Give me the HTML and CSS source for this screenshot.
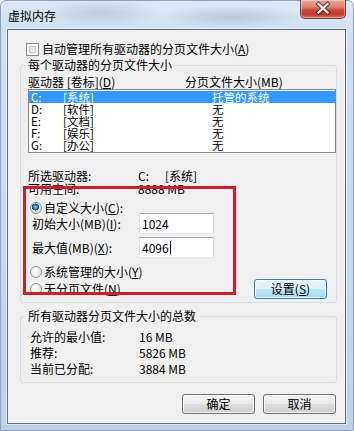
FILE: index.html
```html
<!DOCTYPE html>
<html lang="zh-CN">
<head>
<meta charset="utf-8">
<title>虚拟内存</title>
<link rel="stylesheet" href="styles.css">
</head>
<body>
<div class="window">
  <div class="titlebar">
    <span class="title">虚拟内存</span>
    <button class="close" aria-label="关闭">
      <svg width="46" height="19" viewBox="0 0 46 19">
        <path d="M18.5 5 L27.5 13.5 M27.5 5 L18.5 13.5" stroke="#4a1510" stroke-width="4.2" stroke-linecap="square" fill="none" opacity="0.75"/>
        <path d="M18.5 5 L27.5 13.5 M27.5 5 L18.5 13.5" stroke="#ffffff" stroke-width="2.2" stroke-linecap="square" fill="none"/>
      </svg>
    </button>
  </div>
  <div class="content">
    <label class="check-row"><span class="checkbox"></span><span>自动管理所有驱动器的分页文件大小(<u>A</u>)</span></label>

    <fieldset class="group drives">
      <legend>每个驱动器的分页文件大小</legend>
      <div class="list-head"><span class="col-drive">驱动器 [卷标](<u>D</u>)</span><span class="col-size">分页文件大小(MB)</span></div>
      <div class="listbox">
        <div class="row selected"><span class="c-letter">C:</span><span class="c-label">[系统]</span><span class="c-size">托管的系统</span></div>
        <div class="row"><span class="c-letter">D:</span><span class="c-label">[软件]</span><span class="c-size">无</span></div>
        <div class="row"><span class="c-letter">E:</span><span class="c-label">[文档]</span><span class="c-size">无</span></div>
        <div class="row"><span class="c-letter">F:</span><span class="c-label">[娱乐]</span><span class="c-size">无</span></div>
        <div class="row"><span class="c-letter">G:</span><span class="c-label">[办公]</span><span class="c-size">无</span></div>
      </div>
      <div class="info first"><span class="k">所选驱动器:</span><span class="v"><span class="drv">C:</span>[系统]</span></div>
      <div class="info"><span class="k">可用空间:</span><span class="v">8888 MB</span></div>
      <div class="radio-row custom"><span class="radio on"></span><span>自定义大小(<u>C</u>):</span></div>
      <div class="field-row f1"><span class="k">初始大小(MB)(<u>I</u>):</span><span class="input">1024</span></div>
      <div class="field-row f2"><span class="k">最大值(MB)(<u>X</u>):</span><span class="input">4096<span class="caret"></span></span></div>
      <div class="bottom-row">
        <div class="radios">
          <div class="radio-row r2"><span class="radio"></span><span>系统管理的大小(<u>Y</u>)</span></div>
          <div class="radio-row r3"><span class="radio"></span><span>无分页文件(<u>N</u>)</span></div>
        </div>
        <button class="btn default">设置(<u>S</u>)</button>
      </div>
    </fieldset>

    <fieldset class="group totals">
      <legend>所有驱动器分页文件大小的总数</legend>
      <div class="total first"><span class="k">允许的最小值:</span><span class="v">16 MB</span></div>
      <div class="total"><span class="k">推荐:</span><span class="v">5826 MB</span></div>
      <div class="total"><span class="k">当前已分配:</span><span class="v">3884 MB</span></div>
    </fieldset>

    <div class="actions">
      <button class="btn">确定</button>
      <button class="btn">取消</button>
    </div>

    <div class="highlight"></div>
  </div>
</div>
</body>
</html>
```

FILE: styles.css
```css
* { box-sizing: border-box; }
html, body { margin: 0; padding: 0; }
body {
  width: 354px;
  height: 431px;
  overflow: hidden;
  font-family: "Noto Sans CJK SC", "Noto Sans", sans-serif;
  font-size: 12px;
  color: #000;
  background: #fff;
}
u { text-decoration: underline; text-underline-offset: 1px; }

.window {
  width: 354px;
  height: 431px;
  display: flex;
  flex-direction: column;
  border: 1px solid #8ea3ba;
  border-radius: 6px 6px 0 0;
  background:
    radial-gradient(ellipse 60px 14px at 100px 12px, rgba(140,160,185,0.35), transparent),
    radial-gradient(ellipse 70px 12px at 230px 16px, rgba(130,150,175,0.35), transparent),
    linear-gradient(180deg, #dde8f4 0%, #cfe0f1 8%, #c6d9ed 60%, #bcd1e8 100%);
}

.titlebar {
  height: 28px;
  flex: 0 0 28px;
  display: flex;
  align-items: center;
  padding-left: 7px;
}
.title { flex: 1; line-height: 14px; padding-top: 1px; }
.close {
  align-self: flex-start;
  margin-top: -1px;
  margin-right: 7px;
  width: 46px;
  height: 19px;
  padding: 0;
  border: 1px solid #7e3a33;
  border-top: none;
  border-radius: 0 0 5px 5px;
  background: linear-gradient(180deg, #e9a99d 0%, #dc7e70 40%, #c8473a 55%, #c23a2c 80%, #d9786a 100%);
  box-shadow: inset 0 0 0 1px rgba(255,255,255,0.35);
  display: block;
}
.close svg { display: block; margin: -1px 0 0 -1px; }

.content {
  flex: 1;
  margin: 0 7px 6px 6px;
  border: 1px solid #5f6f83;
  background: #f0f0f0;
  position: relative;
  display: flex;
  flex-direction: column;
  box-shadow: 0 0 0 1px rgba(255,255,255,0.55);
}

.check-row {
  margin: 11px 0 0 18px;
  display: flex;
  align-items: center;
  gap: 3px;
  line-height: 16px;
}
.checkbox {
  width: 13px;
  height: 13px;
  border: 1px solid #8f8f8f;
  background: linear-gradient(135deg, #d8d8d8, #f8f8f8);
  box-shadow: inset 0 0 0 2px #f4f4f4, inset 0 0 0 3px #c9c9c9;
}

.group {
  margin: 1px 8px 0 12px;
  padding: 0 0 6px 7px;
  border: 1px solid #d5dfe5;
  border-radius: 3px;
  min-width: 0;
}
.group legend {
  padding: 0 2px;
  margin-left: -2px;
  line-height: 14px;
}
.totals { margin-top: 6px; padding-bottom: 5px; }

.list-head {
  margin-top: 3px;
  line-height: 14px;
  display: flex;
}
.col-drive { width: 157px; }

.listbox {
  width: 308px;
  height: 64px;
  border: 1px solid #828790;
  background: #fff;
  padding-top: 1px;
}
.row {
  height: 12px;
  line-height: 12px;
  font-size: 11.5px;
  display: flex;
  padding-left: 2px;
}
.row.selected { background: #3399ff; color: #fff; }
.c-letter { width: 32px; }
.c-label { width: 149px; }

.info { display: flex; line-height: 13px; }
.info.first { margin-top: 16px; }
.info .k { width: 110px; }
.drv { display: inline-block; width: 27px; }

.radio-row {
  display: flex;
  align-items: center;
  gap: 2px;
  margin-left: 2px;
}
.radio-row.custom { margin-top: 7px; line-height: 12px; }
.radio-row.r2 { margin-top: 7px; line-height: 14px; }
.radio-row.r3 { margin-top: 3px; line-height: 14px; }
.radio {
  width: 12px;
  height: 12px;
  border-radius: 50%;
  border: 1px solid #8e8f8f;
  background: radial-gradient(circle at 40% 40%, #ffffff, #d9d9d9);
  flex: 0 0 12px;
}
.radio.on {
  border-color: #7a8e9e;
  background:
    radial-gradient(circle at 45% 40%, #9fd5f5 0, #2a7fc0 2px, #0c4f86 3.4px, transparent 3.6px),
    radial-gradient(circle at 40% 40%, #ffffff, #d4d9dc);
}

.field-row {
  display: flex;
  align-items: center;
}
.field-row.f1 { margin-top: -1px; }
.field-row.f2 { margin-top: 3px; }
.field-row .k { width: 111px; padding-left: 4px; }
.input {
  width: 75px;
  height: 21px;
  border: 1px solid;
  border-color: #abadb3 #dbdfe6 #e3e9ef #e2e3ea;
  background: #fff;
  padding-left: 2px;
  line-height: 19px;
  display: flex;
  align-items: center;
}
.caret {
  display: inline-block;
  width: 1px;
  height: 13px;
  background: #000;
  margin-left: 1px;
}

.bottom-row { display: flex; }
.radios { flex: 1; }
.bottom-row .btn {
  align-self: flex-end;
  margin: 0 9px -3px 0;
}

.btn {
  width: 73px;
  height: 20px;
  padding: 0;
  font: inherit;
  color: #000;
  line-height: 18px;
  border: 1px solid #707070;
  border-radius: 3px;
  background: linear-gradient(180deg, #f2f2f2 0%, #ebebeb 48%, #dddddd 52%, #cfcfcf 100%);
  box-shadow: inset 0 0 0 1px rgba(255,255,255,0.75);
}
.btn.default {
  border-color: #3c7fb1;
  background: linear-gradient(180deg, #eaf6fd 0%, #d9f0fc 48%, #bee6fd 52%, #a7d9f5 100%);
}

.total { display: flex; line-height: 16px; }
.total.first { margin-top: 6px; }
.total .k { width: 111px; padding-left: 2px; }

.actions {
  margin: 11px 9px 0 0;
  display: flex;
  justify-content: flex-end;
  gap: 8px;
}

.highlight {
  position: absolute;
  left: 15px;
  top: 156px;
  width: 213px;
  height: 109px;
  border: 3px solid #d21d22;
  pointer-events: none;
}
```
